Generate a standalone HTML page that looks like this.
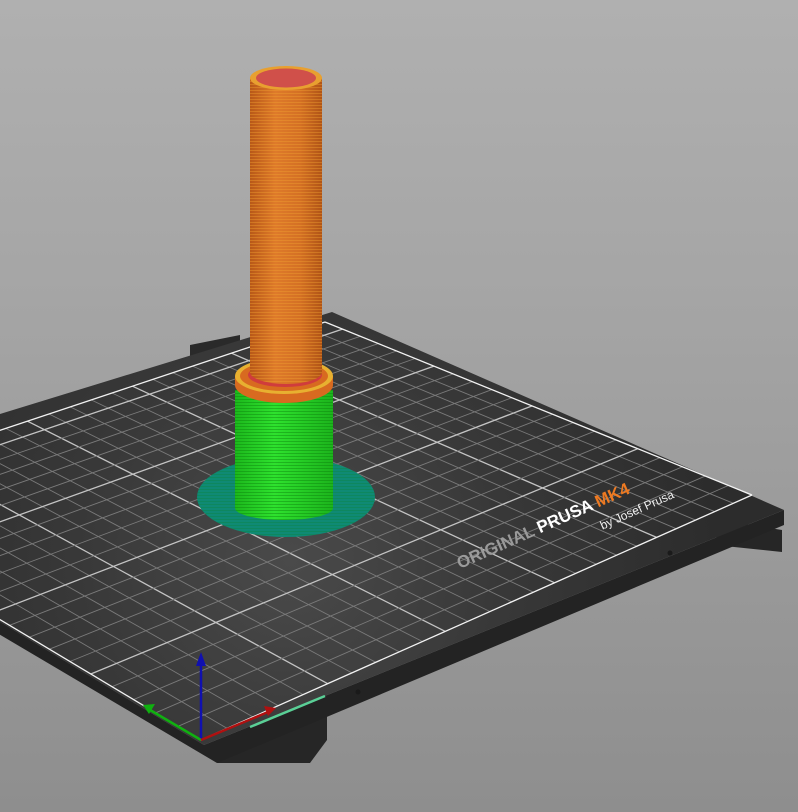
<!DOCTYPE html>
<html><head><meta charset="utf-8"><style>
html,body{margin:0;padding:0;width:798px;height:812px;overflow:hidden}
body{background:linear-gradient(#b0b0b0,#a4a4a4 40%,#8e8e8e)}
svg{display:block}
</style></head><body>
<svg width="798" height="812" viewBox="0 0 798 812" xmlns="http://www.w3.org/2000/svg">
<defs>
<radialGradient id="pg" cx="290" cy="560" r="430" gradientUnits="userSpaceOnUse">
<stop offset="0" stop-color="#4a4a4a"/><stop offset="0.5" stop-color="#383838"/><stop offset="1" stop-color="#2c2c2c"/></radialGradient>
<linearGradient id="og" x1="0" x2="1"><stop offset="0" stop-color="#b85818"/><stop offset="0.35" stop-color="#de7a2a"/><stop offset="0.7" stop-color="#d47024"/><stop offset="1" stop-color="#b05416"/></linearGradient>
<linearGradient id="gg" x1="0" x2="1"><stop offset="0" stop-color="#1cb81c"/><stop offset="0.4" stop-color="#2ee22e"/><stop offset="1" stop-color="#1cb41c"/></linearGradient>
<pattern id="os" width="4" height="3" patternUnits="userSpaceOnUse"><rect width="4" height="1" fill="#f0a030" opacity="0.4"/></pattern>
<pattern id="gs" width="4" height="3" patternUnits="userSpaceOnUse"><rect width="4" height="1" fill="#0a7a0a" opacity="0.4"/></pattern>
</defs>
<polygon points="217,763 310,763 327,740 327,700 240,740" fill="#262626"/>
<polygon points="715,545 782,552 782,530 720,520" fill="#262626"/>
<polygon points="190,345 240,335 240,350 190,360" fill="#2a2a2a"/>
<polygon points="-228,484 204,745 784,510 784,525 217,763 -228,500" fill="#232323"/>
<polygon points="-228,484 332,312 784,510 204,745" fill="url(#pg)"/>
<g id="grid" stroke-linecap="butt"></g>
<g transform="translate(460,569) rotate(-24)" font-family="Liberation Sans, sans-serif" font-weight="bold">
<text x="0" y="0" font-size="17" fill="#9a9a9a">ORIGINAL <tspan fill="#ffffff">PRUSA</tspan> <tspan fill="#ee7a22">MK4</tspan></text>
<text x="146" y="22" font-size="12" font-weight="normal" fill="#f0f0f0">by Josef Prusa</text>
</g>
<circle cx="358" cy="692" r="2.5" fill="#1a1a1a"/><circle cx="670" cy="553" r="2.5" fill="#1a1a1a"/>
<ellipse cx="286" cy="497" rx="89" ry="40" fill="#0f8a74"/>
<ellipse cx="286" cy="497" rx="89" ry="40" fill="url(#gs)" opacity="0.5"/>
<path d="M235,390 L235,508 A49,12 0 0 0 333,508 L333,390 Z" fill="url(#gg)"/>
<path d="M235,390 L235,508 A49,12 0 0 0 333,508 L333,390 Z" fill="url(#gs)"/>
<path d="M235,376 L235,385 A49,18 0 0 0 333,385 L333,376 Z" fill="#d86a20"/>
<ellipse cx="284" cy="376" rx="49" ry="18" fill="#e8b030"/>
<ellipse cx="284" cy="376" rx="44" ry="15" fill="#d86a20"/>
<ellipse cx="285" cy="375" rx="37" ry="12" fill="#d03c3c"/>
<path d="M250,78 L250,372 A36,12 0 0 0 322,372 L322,78 Z" fill="url(#og)"/>
<path d="M250,78 L250,372 A36,12 0 0 0 322,372 L322,78 Z" fill="url(#os)"/>
<ellipse cx="286" cy="78" rx="36" ry="12" fill="#e8a030"/>
<ellipse cx="286" cy="78" rx="30" ry="9.5" fill="#d0504a"/>
<line x1="201" y1="740" x2="201" y2="662" stroke="#1010b0" stroke-width="2.5"/>
<polygon points="196,666 206,666 201,652" fill="#1010b0"/>
<line x1="201" y1="740" x2="150" y2="710" stroke="#10b010" stroke-width="2.5"/>
<polygon points="143,705 155,704 149,714" fill="#10b010"/>
<line x1="201" y1="740" x2="268" y2="712" stroke="#b01010" stroke-width="2.5"/>
<polygon points="276,708 264,706 268,716" fill="#b01010"/>
<line x1="250" y1="727" x2="325" y2="696" stroke="#5acf96" stroke-width="2.5"/>
</svg>
<script>
(function(){
var P=[[201,740],[752,495],[325,322],[-203,498]];
var x0=P[0][0],y0=P[0][1],x1=P[1][0],y1=P[1][1],x2=P[2][0],y2=P[2][1],x3=P[3][0],y3=P[3][1];
var dx1=x1-x2,dx2=x3-x2,dx3=x0-x1+x2-x3,dy1=y1-y2,dy2=y3-y2,dy3=y0-y1+y2-y3;
var den=dx1*dy2-dx2*dy1;
var g=(dx3*dy2-dx2*dy3)/den,h=(dx1*dy3-dx3*dy1)/den;
var a=x1-x0+g*x1,b=x3-x0+h*x3,c=x0,d=y1-y0+g*y1,e=y3-y0+h*y3,f=y0;
function m(s,t){var w=g*s+h*t+1;return [(a*s+b*t+c)/w,(d*s+e*t+f)/w];}
var out='';
function ln(p,q,col,w){out+='<line x1="'+p[0].toFixed(1)+'" y1="'+p[1].toFixed(1)+'" x2="'+q[0].toFixed(1)+'" y2="'+q[1].toFixed(1)+'" stroke="'+col+'" stroke-width="'+w+'"/>';}
for(var i=1;i<25;i++){var s=i/25;var bold=(i%5==0);ln(m(s,0),m(s,1),bold?'#c4c4c4':'#7a7a7a',bold?1.3:0.9);}
for(var j=1;j<21;j++){var t=j/21;var bold=(j%5==0);ln(m(0,t),m(1,t),bold?'#c4c4c4':'#7a7a7a',bold?1.3:0.9);}
var c0=m(0,0),c1=m(1,0),c2=m(1,1),c3=m(0,1);
ln(c0,c1,'#f2f2f2',1.3);ln(c1,c2,'#f2f2f2',1.3);ln(c2,c3,'#f2f2f2',1.3);ln(c3,c0,'#f2f2f2',1.3);
document.getElementById('grid').innerHTML=out;
})();
</script>
</body></html>
